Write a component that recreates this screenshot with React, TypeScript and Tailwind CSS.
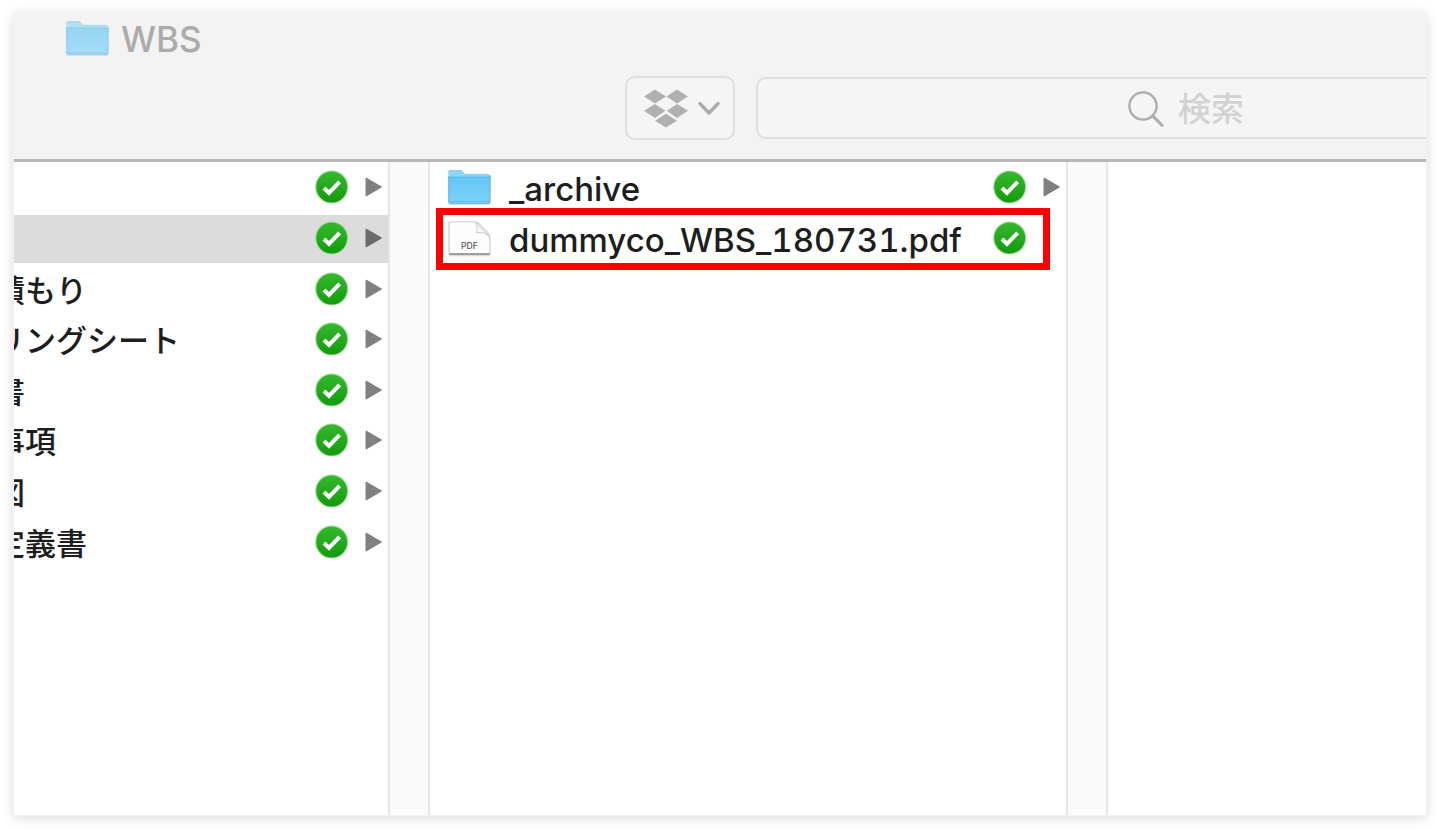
import { Fragment } from "react";

type Entry = { name: string; kind?: "folder" | "pdf"; selected?: boolean; marked?: boolean };

const parentEntries: Entry[] = [
  { name: "" },
  { name: "", selected: true },
  { name: "積もり" },
  { name: "リングシート" },
  { name: "書" },
  { name: "事項" },
  { name: "図" },
  { name: "定義書" },
];

const childEntries: Entry[] = [
  { name: "_archive", kind: "folder" },
  { name: "dummyco_WBS_180731.pdf", kind: "pdf", marked: true },
];

function FolderIcon({ faded = false }: { faded?: boolean }) {
  const id = faded ? "folder-faded" : "folder-full";
  return (
    <svg aria-hidden="true" viewBox="0 0 44 38" className={faded ? "h-[38px] w-11 shrink-0 opacity-65" : "h-[38px] w-11 shrink-0"}>
      <defs>
        <linearGradient id={id} x1="0" y1="0" x2="0" y2="1">
          <stop offset="0" stopColor="#64c6f4" />
          <stop offset="1" stopColor="#7dd1fb" />
        </linearGradient>
      </defs>
      <rect x="1.5" y="6" width="41.8" height="29.8" rx="1.6" fill="#000" opacity=".14" />
      <path d="M1.4 3.2Q1.4 1.6 3 1.6H13.4Q14.8 1.6 15.6 2.8L17.8 5.4H41.8Q43.4 5.4 43.4 7V12H1.4Z" fill="#8dd7f6" />
      <path d="M1.4 3.2Q1.4 1.6 3 1.6H13.4Q14.8 1.6 15.6 2.8L17.8 5.4H41.8" fill="none" stroke="#72b9da" strokeWidth=".7" />
      <path d="M1.4 8H43.4V33Q43.4 34.6 41.8 34.6H3Q1.4 34.6 1.4 33Z" fill={`url(#${id})`} />
      <path d="M1.4 8H43.4M1.4 32.8H43.4" stroke="#58b6e2" strokeWidth=".9" />
      <path d="M1.8 7.6V33.4M43 6.6V33.4M2.6 34.6H42.2" fill="none" stroke="#62afd6" strokeWidth=".8" />
    </svg>
  );
}

function PdfIcon() {
  return (
    <svg aria-hidden="true" viewBox="0 0 44 38" className="h-[38px] w-11 shrink-0">
      <path d="M1.2 1.6H28Q34 2.4 35 6Q41.4 10 43.6 17V35H1.2Z" fill="#000" opacity=".12" />
      <path d="M2 35.6H43" stroke="#000" opacity=".14" strokeWidth="1.2" />
      <path d="M2.2 3.6Q2.2 1.8 4 1.8H28Q33 3 34 6.4Q40.4 10.4 42.8 17V33.8H2.2Z" fill="#fdfdfd" stroke="#cfcfcf" strokeWidth=".9" />
      <path d="M29.4 2.6Q30.4 7 29.8 12.8Q37.4 11.2 42 16.6Q38 11.6 33.6 7.6Z" fill="#f8f8f8" stroke="#c6c6c6" strokeWidth=".9" />
      <path d="M2.2 34H42.8" stroke="#8a8a8a" strokeWidth="1.3" />
      <text x="22.4" y="28.6" textAnchor="middle" fontSize="8.6" fontFamily="Inter, sans-serif" fontWeight="500" fill="#555">PDF</text>
    </svg>
  );
}

function SyncedIcon() {
  return (
    <svg role="img" aria-label="同期済み" viewBox="0 0 34 34" className="size-[34px] shrink-0">
      <defs>
        <linearGradient id="synced" x1="0" y1="0" x2="0" y2="1">
          <stop offset="0" stopColor="#36b92c" />
          <stop offset="1" stopColor="#139b0e" />
        </linearGradient>
      </defs>
      <circle cx="16.7" cy="17" r="16.6" fill="#a3dca0" />
      <circle cx="16.7" cy="17" r="15.4" fill="url(#synced)" />
      <path d="M9 18L14 22.8L24.6 11.8" fill="none" stroke="#fff" strokeWidth="4" />
    </svg>
  );
}

function Disclosure({ dark }: { dark?: boolean }) {
  return (
    <svg aria-hidden="true" viewBox="0 0 18 20" className="h-5 w-[18px] shrink-0">
      <path d="M1.2 1.4L16.2 10L1.2 18.6Z" fill={dark ? "#6b6b6b" : "#808080"} stroke={dark ? "#6b6b6b" : "#808080"} strokeWidth="1.4" strokeLinejoin="round" />
    </svg>
  );
}

function Gutter() {
  return <div className="w-[42px] shrink-0 border-x-2 border-[#e6e6e6] bg-[#fafafa]" />;
}

function Row({ entry }: { entry: Entry }) {
  return (
    <li className="relative pt-[2px]">
      <div className={`flex h-full items-center pr-[5px] ${entry.selected ? "bg-[#dcdcdc]" : ""} ${entry.kind ? "pl-[17px]" : ""}`}>
        {entry.kind === "folder" && <FolderIcon />}
        {entry.kind === "pdf" && <PdfIcon />}
        <span
          className={
            entry.kind
              ? "ml-[18px] flex-1 whitespace-nowrap pt-[2px] text-[33px] font-medium leading-[40px] tabular-nums"
              : "-ml-5 flex-1 whitespace-nowrap pt-[2px] text-[31px] font-medium leading-[40px]"
          }
        >
          {entry.name}
        </span>
        <div className="-mt-[2px] flex items-center gap-4">
          <SyncedIcon />
          {entry.kind === "pdf" ? <span className="w-[18px]" /> : <Disclosure dark={entry.selected} />}
        </div>
      </div>
      {entry.marked && (
        <div className="pointer-events-none absolute -top-[5px] left-[6px] right-4 h-[62px] border-[7px] border-[#ff0000]" />
      )}
    </li>
  );
}

export default function App() {
  const columns = [
    { label: "親フォルダ", entries: parentEntries, width: "w-[374px]" },
    { label: "WBS", entries: childEntries, width: "w-[636px]" },
  ];
  return (
    <main className="flex min-h-screen flex-col bg-white px-[14px] pb-[15px] pt-[13px] font-['Inter','Noto_Sans_CJK_JP',sans-serif] text-[#1e1e1e]">
      <div className="flex flex-1 flex-col overflow-hidden bg-white shadow-[0_0_0_1px_#f2f2f2,0_2px_12px_rgba(0,0,0,0.17)]">
        <header className="border-b-[3px] border-[#b8b8b8] bg-[#f3f3f3] pb-[19px]">
          <div className="flex h-[52px] items-center pl-[51px]">
            <FolderIcon faded />
            <h1 className="ml-3 text-[35px] font-medium leading-[40px] text-[#ababab]">WBS</h1>
          </div>
          <div className="mt-[11px] flex items-center gap-[21px] pl-[611px]">
            <button
              type="button"
              aria-label="Dropbox"
              className="flex h-16 w-[110px] shrink-0 items-center gap-[9px] rounded-[10px] border-2 border-[#dedede] bg-[#f5f5f5] pl-4"
            >
              <svg aria-hidden="true" viewBox="0 0 46 40" className="h-10 w-[46px] shrink-0" fill="#b0b0b0">
                <path d="M12 1.5L23 8.5L12 15.5L1 8.5ZM34 1.5L45 8.5L34 15.5L23.5 8.5ZM12 16.1L22.4 22.8L12 29.9L1 22.8ZM34 16.1L45 22.8L34 29.9L23.8 22.8ZM23 25.7L34 32.7L23 39.5L12 32.7Z" />
              </svg>
              <svg aria-hidden="true" viewBox="0 0 22 14" className="h-[14px] w-[22px] shrink-0" fill="none" stroke="#ababab" strokeWidth="3.4" strokeLinecap="round">
                <path d="M2 2.6L11 12L20 2.6" />
              </svg>
            </button>
            <label className="flex h-[62px] flex-1 items-center rounded-l-[10px] border-2 border-r-0 border-[#dedede] bg-[#f5f5f5] pl-[369px]">
              <svg aria-hidden="true" viewBox="0 0 38 38" className="size-[38px] shrink-0" fill="none" stroke="#adadad" strokeWidth="2.4">
                <circle cx="16" cy="17" r="13.6" />
                <path d="M25.4 26.6L36 37.2" strokeWidth="3" />
              </svg>
              <input
                type="search"
                aria-label="検索"
                placeholder="検索"
                className="ml-[13px] h-11 w-full min-w-0 bg-transparent pt-1 text-[33px] font-medium outline-none placeholder:text-[#d2d2d2]"
              />
            </label>
          </div>
        </header>
        <div className="flex flex-1">
          {columns.map((column) => (
            <Fragment key={column.label}>
              <ul aria-label={column.label} className={`grid h-[405px] shrink-0 grid-rows-8 ${column.width}`}>
                {column.entries.map((entry, index) => (
                  <Row key={index} entry={entry} />
                ))}
              </ul>
              <Gutter />
            </Fragment>
          ))}
          <div className="flex-1" />
        </div>
      </div>
    </main>
  );
}
